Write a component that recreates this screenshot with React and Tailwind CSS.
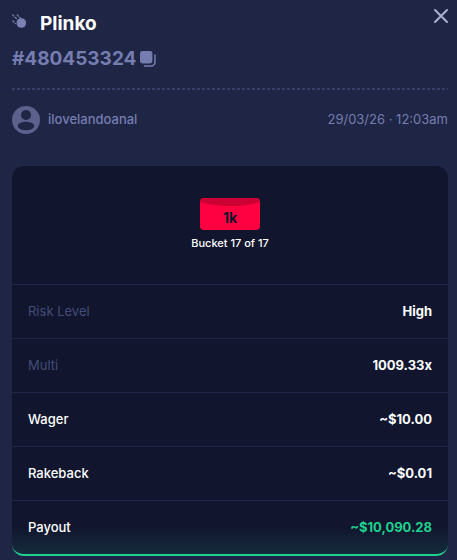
import { useState } from "react";

const rows = [
  { label: "Risk Level", value: "High", muted: true },
  { label: "Multi", value: "1009.33x", muted: true },
  { label: "Wager", value: "~$10.00" },
  { label: "Rakeback", value: "~$0.01" },
  { label: "Payout", value: "~$10,090.28", payout: true },
];

function PlinkoIcon() {
  return (
    <svg viewBox="0 0 16 20" className="h-5 w-4 text-[#7b82b2]" fill="none" aria-hidden="true">
      <circle cx="9.3" cy="9" r="4.8" fill="currentColor" />
      <path
        d="M0.8 1l4.400 4.400M5.300 1l3 3M0.800 6.900l2.700 2.700"
        stroke="currentColor"
        strokeWidth="1.2"
        strokeLinecap="round"
        strokeDasharray="1.600 1.800"
      />
    </svg>
  );
}

function CopyIcon() {
  return (
    <svg viewBox="0 0 16 16" className="h-4 w-4" fill="none" aria-hidden="true">
      <rect x="0" y="0" width="12.4" height="12.4" rx="2.4" fill="currentColor" />
      <path
        d="M15 4v7.2a3.8 3.8 0 0 1-3.8 3.8H4.4"
        stroke="currentColor"
        strokeWidth="1.5"
        strokeLinecap="round"
      />
    </svg>
  );
}

function AvatarIcon() {
  return (
    <svg viewBox="0 0 28 28" className="h-7 w-7" aria-hidden="true">
      <circle cx="14" cy="14" r="14" fill="#5b608c" />
      <circle cx="14" cy="9" r="5" fill="#1f2545" />
      <ellipse cx="14" cy="20" rx="8.3" ry="4.2" fill="#1f2545" />
    </svg>
  );
}

function Bucket() {
  return (
    <div className="relative h-8 w-15 overflow-hidden rounded-sm bg-[#ff0040]">
      <svg viewBox="0 0 60 8" className="absolute top-0 left-0 h-2 w-full" aria-hidden="true">
        <path d="M0 0h60v4C52 6.600 42 8 30 8S8 6.600 0 4z" fill="#cc0033" />
      </svg>
      <p className="relative pt-2.5 text-center text-sm leading-5 font-bold text-[#11162e]">1k</p>
    </div>
  );
}

export default function App() {
  const [open, setOpen] = useState(true);

  const copyId = () => {
    navigator.clipboard?.writeText("480453324");
  };

  return (
    <div className="min-h-screen bg-[#1f2545] font-['Inter','Liberation_Sans',sans-serif]">
      {open && (
        <div className="relative pt-3 pr-[9px] pb-1 pl-3">
          <button
            type="button"
            aria-label="Close"
            onClick={() => setOpen(false)}
            className="absolute top-2 right-2 text-[#a9b0d2]"
          >
            <svg viewBox="0 0 16 16" className="h-4 w-4" fill="none" aria-hidden="true">
              <path d="M2 2l12 12M14 2L2 14" stroke="currentColor" strokeWidth="2" strokeLinecap="round" />
            </svg>
          </button>

          <header>
            <div className="flex h-6 items-center gap-3">
              <PlinkoIcon />
              <h1 className="text-[19px] font-bold text-white">Plinko</h1>
            </div>
            <div className="mt-[11px] flex h-6 items-center gap-1 text-[#757db0]">
              <span className="text-[19px] font-bold">#480453324</span>
              <button type="button" aria-label="Copy bet ID" onClick={copyId}>
                <CopyIcon />
              </button>
            </div>
          </header>

          <div className="mt-[17px] h-0.5 bg-[repeating-linear-gradient(90deg,#363d66_0_3px,transparent_3px_5px)]" />

          <div className="mt-4 flex items-center justify-between text-[13px] text-[#757db0]">
            <div className="flex items-center gap-2">
              <AvatarIcon />
              <span className="font-medium">ilovelandoanal</span>
            </div>
            <time dateTime="2026-03-29T00:03">29/03/26 · 12:03am</time>
          </div>

          <section className="mt-8 overflow-hidden rounded-xl border-b-2 border-[#1fd18e] bg-[#11162e]">
            <div className="flex flex-col items-center gap-1 pt-8 pb-8">
              <Bucket />
              <p className="text-[11px] leading-[18px] font-medium text-white">Bucket 17 of 17</p>
            </div>
            <dl className="text-[13px]">
              {rows.map(({ label, value, muted, payout }) => (
                <div
                  key={label}
                  className={`flex h-[54px] items-center justify-between border-t border-[#1f2748] px-4 ${
                    payout ? "bg-linear-to-b from-transparent from-50% to-[#152c3d]" : ""
                  }`}
                >
                  <dt className={muted ? "text-[#454b78]" : "font-medium text-white"}>{label}</dt>
                  <dd className={`font-bold ${payout ? "text-[#1fd18e]" : "text-white"}`}>{value}</dd>
                </div>
              ))}
            </dl>
          </section>
        </div>
      )}
    </div>
  );
}
